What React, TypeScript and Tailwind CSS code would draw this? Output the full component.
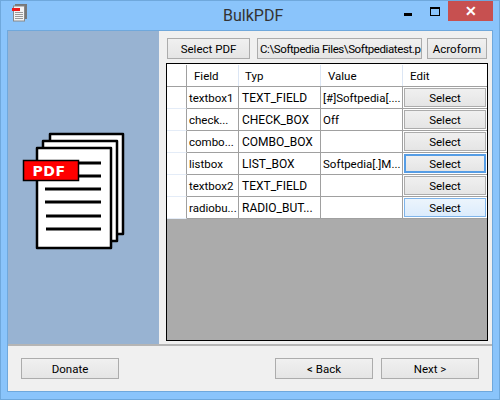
const rows = [
  { field: 'textbox1', typ: 'TEXT_FIELD', value: '[#]Softpedia[....' },
  { field: 'check...', typ: 'CHECK_BOX', value: 'Off' },
  { field: 'combo...', typ: 'COMBO_BOX', value: '' },
  { field: 'listbox', typ: 'LIST_BOX', value: 'Softpedia[.]M...', focused: true },
  { field: 'textbox2', typ: 'TEXT_FIELD', value: '' },
  { field: 'radiobu...', typ: 'RADIO_BUT...', value: '', hover: true },
]

function Button({ label, className }: { label: string; className: string }) {
  return (
    <button className={`flex items-center justify-center border border-[#acacac] bg-gradient-to-b from-[#f0f0f0] to-[#e5e5e5] text-[11.5px] leading-[18px] text-black ${className}`}>
      {label}
    </button>
  )
}

function PdfIcon() {
  return (
    <svg width="110" height="125" viewBox="0 0 110 125" className="shrink-0">
      <rect x="29" y="7" width="73" height="100" fill="#fff" stroke="#000" strokeWidth="2.5" strokeLinejoin="round" />
      <rect x="22" y="14" width="74" height="100" fill="#fff" stroke="#000" strokeWidth="2.5" strokeLinejoin="round" />
      <rect x="16" y="21" width="74" height="100" fill="#fff" stroke="#000" strokeWidth="2.5" strokeLinejoin="round" />
      <g stroke="#000" strokeWidth="3">
        <line x1="45" y1="36" x2="80" y2="36" />
        <line x1="45" y1="49" x2="80" y2="49" />
        <line x1="24" y1="62" x2="80" y2="62" />
        <line x1="24" y1="75" x2="80" y2="75" />
        <line x1="25" y1="89" x2="80" y2="89" />
        <line x1="25" y1="102" x2="80" y2="102" />
      </g>
      <rect x="2.5" y="33.5" width="55" height="20" fill="#f00" stroke="#000" strokeWidth="1.5" />
      <text x="28" y="49" textAnchor="middle" fill="#fff" fontFamily="DejaVu Sans, sans-serif" fontWeight="700" fontSize="14" letterSpacing="0.5">PDF</text>
    </svg>
  )
}

function TitleIcon() {
  return (
    <svg width="16" height="18" viewBox="0 0 16 18" className="shrink-0">
      <rect x="3" y="0" width="12" height="15" fill="#777" />
      <rect x="1.5" y="2" width="11" height="15" fill="#f4f4f4" stroke="#888" />
      <g stroke="#999">
        <line x1="3" y1="8.5" x2="11" y2="8.5" />
        <line x1="3" y1="10.5" x2="11" y2="10.5" />
        <line x1="3" y1="12.5" x2="11" y2="12.5" />
        <line x1="3" y1="14.5" x2="11" y2="14.5" />
      </g>
      <rect x="0" y="4" width="8" height="3" fill="#f01818" />
    </svg>
  )
}

export default function App() {
  return (
    <div className="flex h-[400px] w-[500px] flex-col overflow-hidden border border-[#6fa8dc] bg-[#8ac4fb] font-['Roboto','Noto_Sans',sans-serif] text-[11.5px] leading-[18px] text-black">
      {/* Title bar */}
      <div className="relative flex h-[29px] shrink-0 items-center pl-[11px]">
        <div className="mt-[-6px]">
          <TitleIcon />
        </div>
        <span className="absolute left-[222px] top-[5px] text-[16px] leading-[20px] text-[#333]">BulkPDF</span>
        <div className="ml-auto flex self-start pr-[6px]">
          <div className="flex h-[20px] w-[27px] items-end justify-center pb-[5px]">
            <div className="h-[3px] w-[8px] bg-black" />
          </div>
          <div className="flex h-[20px] w-[27px] items-center justify-center">
            <div className="h-[9px] w-[10px] border border-t-2 border-black" />
          </div>
          <div className="flex h-[20px] w-[45px] items-center justify-center bg-[#c75050] text-[14px] font-bold leading-none text-white">
            ✕
          </div>
        </div>
      </div>

      {/* Client area */}
      <div className="mx-[6px] flex min-h-0 flex-1 flex-col border border-[#6fa8dc] bg-[#f0f0f0]">
        <div className="flex min-h-0 flex-1 border-b-2 border-[#b5b5b5]">
          <div className="flex w-[151px] shrink-0 items-center justify-start bg-[#98b3d2] pl-[13px] pt-[4px]">
            <PdfIcon />
          </div>
          <div className="flex min-w-0 flex-1 flex-col pl-[7px] pr-[4px] pt-[7px]">
            <div className="flex h-[21px] shrink-0 gap-[7px] pl-px">
              <Button label="Select PDF" className="w-[83px]" />
              <div className="flex w-[165px] items-center overflow-hidden whitespace-nowrap border border-[#acacac] bg-gradient-to-b from-[#f0f0f0] to-[#e5e5e5] pl-[2px] text-[11.5px] tracking-[-0.4px]">
                C:\Softpedia Files\Softpediatest.p
              </div>
              <Button label="Acroform" className="ml-[-2px] w-[60px]" />
            </div>
            <div className="mt-[4px] flex h-[278px] flex-col border border-black bg-[#ababab]">
              <div className="flex h-[23px] shrink-0 border-b border-[#a0a0a0] bg-white pt-px">
                <div className="w-[20px] border-r border-[#a0a0a0]" />
                <div className="flex w-[52px] items-center border-r border-[#dce6f4] pl-[7px]">Field</div>
                <div className="flex w-[82px] items-center border-r border-[#dce6f4] pl-[6px]">Typ</div>
                <div className="flex w-[82px] items-center border-r border-[#dce6f4] pl-[7px]">Value</div>
                <div className="flex flex-1 items-center pl-[7px]">Edit</div>
              </div>
              {rows.map((row) => (
                <div key={row.field} className="flex h-[22px] shrink-0 bg-white">
                  <div className="w-[20px] border-b border-r border-b-[#e4ecf7] border-r-[#a0a0a0]" />
                  <div className="flex w-[52px] items-center overflow-hidden whitespace-nowrap border-b border-r border-[#a0a0a0] pl-[2px]">{row.field}</div>
                  <div className="flex w-[82px] items-center overflow-hidden whitespace-nowrap border-b border-r border-[#a0a0a0] pl-[3px] text-[12px]">{row.typ}</div>
                  <div className="flex w-[82px] items-center overflow-hidden whitespace-nowrap border-b border-r border-[#a0a0a0] pl-[2px]">{row.value}</div>
                  <div className="flex flex-1 border-b border-[#a0a0a0] p-px">
                    <Button
                      label="Select"
                      className={
                        row.focused
                          ? 'h-full w-full !border-2 !border-[#569de5]'
                          : row.hover
                            ? 'h-full w-full !border-[#7eb4ea] !from-[#ecf4fc] !to-[#dcecfc]'
                            : 'h-full w-full'
                      }
                    />
                  </div>
                </div>
              ))}
            </div>
          </div>
        </div>

        {/* Footer */}
        <div className="flex h-[45px] shrink-0 items-start pt-[12px] pl-[13px] pr-[13px]">
          <Button label="Donate" className="h-[21px] w-[98px]" />
          <div className="ml-auto flex gap-[8px]">
            <Button label="< Back" className="h-[21px] w-[98px]" />
            <Button label="Next >" className="h-[21px] w-[98px]" />
          </div>
        </div>
      </div>
      <div className="h-[7px] shrink-0" />
    </div>
  )
}
